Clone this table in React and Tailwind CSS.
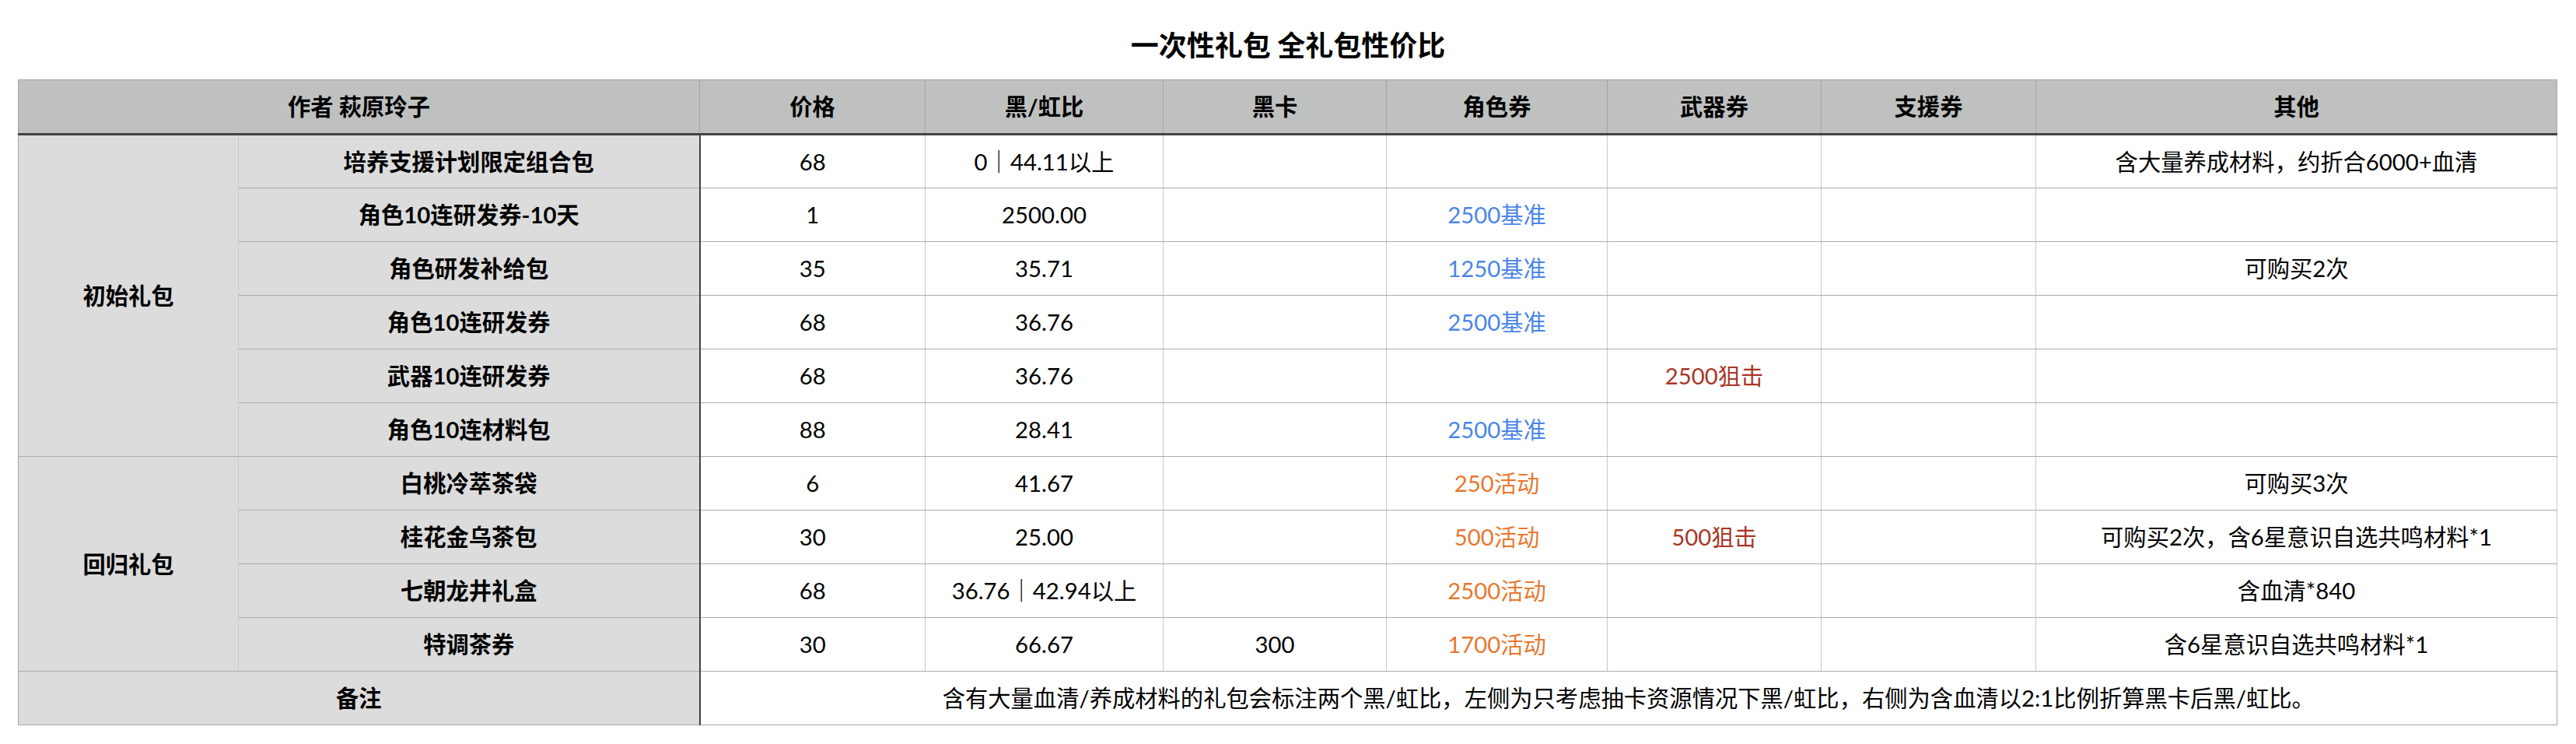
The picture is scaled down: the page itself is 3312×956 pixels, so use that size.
import React from "react";

const F = { fontFamily: '"Lato", "Noto Sans CJK SC", sans-serif' };

const BLUE = "text-[#4a86e8]";
const ORANGE = "text-[#e8772e]";
const RED = "text-[#a93626]";

const rows = [
  { name: "培养支援计划限定组合包", price: "68", ratio: "0｜44.11以上", other: "含大量养成材料，约折合6000+血清" },
  { name: "角色10连研发券-10天", price: "1", ratio: "2500.00", role: ["2500基准", BLUE] },
  { name: "角色研发补给包", price: "35", ratio: "35.71", role: ["1250基准", BLUE], other: "可购买2次" },
  { name: "角色10连研发券", price: "68", ratio: "36.76", role: ["2500基准", BLUE] },
  { name: "武器10连研发券", price: "68", ratio: "36.76", weapon: ["2500狙击", RED] },
  { name: "角色10连材料包", price: "88", ratio: "28.41", role: ["2500基准", BLUE] },
  { name: "白桃冷萃茶袋", price: "6", ratio: "41.67", role: ["250活动", ORANGE], other: "可购买3次" },
  { name: "桂花金乌茶包", price: "30", ratio: "25.00", role: ["500活动", ORANGE], weapon: ["500狙击", RED], other: "可购买2次，含6星意识自选共鸣材料*1" },
  { name: "七朝龙井礼盒", price: "68", ratio: "36.76｜42.94以上", role: ["2500活动", ORANGE], other: "含血清*840" },
  { name: "特调茶券", price: "30", ratio: "66.67", black: "300", role: ["1700活动", ORANGE], other: "含6星意识自选共鸣材料*1" },
];

const cellBase = "h-[69px] p-0 text-center align-middle border-b border-b-[#ababab] border-r border-r-[#c8c8c8]";

export default function App() {
  return (
    <div className="w-[3312px] h-[956px] bg-white text-black" style={F}>
      <div className="h-[102px] flex items-center justify-center pt-[14px]">
        <h1 className="text-[36px] font-bold leading-none">一次性礼包 全礼包性价比</h1>
      </div>
      <table className="table-fixed border-collapse ml-[23px] w-[3264px] text-[29.3px] leading-none border border-[#a6a6a6]">
        <colgroup>
          <col className="w-[283px]" />
          <col className="w-[593px]" />
          <col className="w-[290px]" />
          <col className="w-[306px]" />
          <col className="w-[287px]" />
          <col className="w-[284px]" />
          <col className="w-[275px]" />
          <col className="w-[276px]" />
          <col className="w-[670px]" />
        </colgroup>
        <thead>
          <tr className="bg-[#bfc1c0] font-bold">
            <th colSpan={2} className="h-[70px] p-0 text-center align-middle font-bold border-b-[3px] border-b-[#434343] border-r border-r-[#a3a3a3]">作者 萩原玲子</th>
            <th className="h-[70px] p-0 font-bold border-b-[3px] border-b-[#434343] border-r border-r-[#a3a3a3]">价格</th>
            <th className="h-[70px] p-0 font-bold border-b-[3px] border-b-[#434343] border-r border-r-[#a3a3a3]">黑/虹比</th>
            <th className="h-[70px] p-0 font-bold border-b-[3px] border-b-[#434343] border-r border-r-[#a3a3a3]">黑卡</th>
            <th className="h-[70px] p-0 font-bold border-b-[3px] border-b-[#434343] border-r border-r-[#a3a3a3]">角色券</th>
            <th className="h-[70px] p-0 font-bold border-b-[3px] border-b-[#434343] border-r border-r-[#a3a3a3]">武器券</th>
            <th className="h-[70px] p-0 font-bold border-b-[3px] border-b-[#434343] border-r border-r-[#a3a3a3]">支援券</th>
            <th className="h-[70px] p-0 font-bold border-b-[3px] border-b-[#434343]">其他</th>
          </tr>
        </thead>
        <tbody>
          {rows.map((r, i) => (
            <tr key={i}>
              {i === 0 && (
                <td rowSpan={6} className={`${cellBase} bg-[#dcdcdc] font-bold`}>初始礼包</td>
              )}
              {i === 6 && (
                <td rowSpan={4} className={`${cellBase} bg-[#dcdcdc] font-bold`}>回归礼包</td>
              )}
              <td className="h-[69px] p-0 text-center align-middle bg-[#dcdcdc] font-bold border-b border-b-[#ababab] border-r-2 border-r-[#434343]">{r.name}</td>
              <td className={cellBase}>{r.price}</td>
              <td className={cellBase}>{r.ratio}</td>
              <td className={cellBase}>{r.black || ""}</td>
              <td className={cellBase}>{r.role ? <span className={r.role[1]}>{r.role[0]}</span> : ""}</td>
              <td className={cellBase}>{r.weapon ? <span className={r.weapon[1]}>{r.weapon[0]}</span> : ""}</td>
              <td className={cellBase}></td>
              <td className={cellBase}>{r.other || ""}</td>
            </tr>
          ))}
          <tr>
            <td colSpan={2} className="h-[69px] p-0 text-center align-middle bg-[#dcdcdc] font-bold border-r-2 border-r-[#434343]">备注</td>
            <td colSpan={7} className="h-[69px] p-0 text-center align-middle">含有大量血清/养成材料的礼包会标注两个黑/虹比，左侧为只考虑抽卡资源情况下黑/虹比，右侧为含血清以2:1比例折算黑卡后黑/虹比。</td>
          </tr>
        </tbody>
      </table>
    </div>
  );
}
